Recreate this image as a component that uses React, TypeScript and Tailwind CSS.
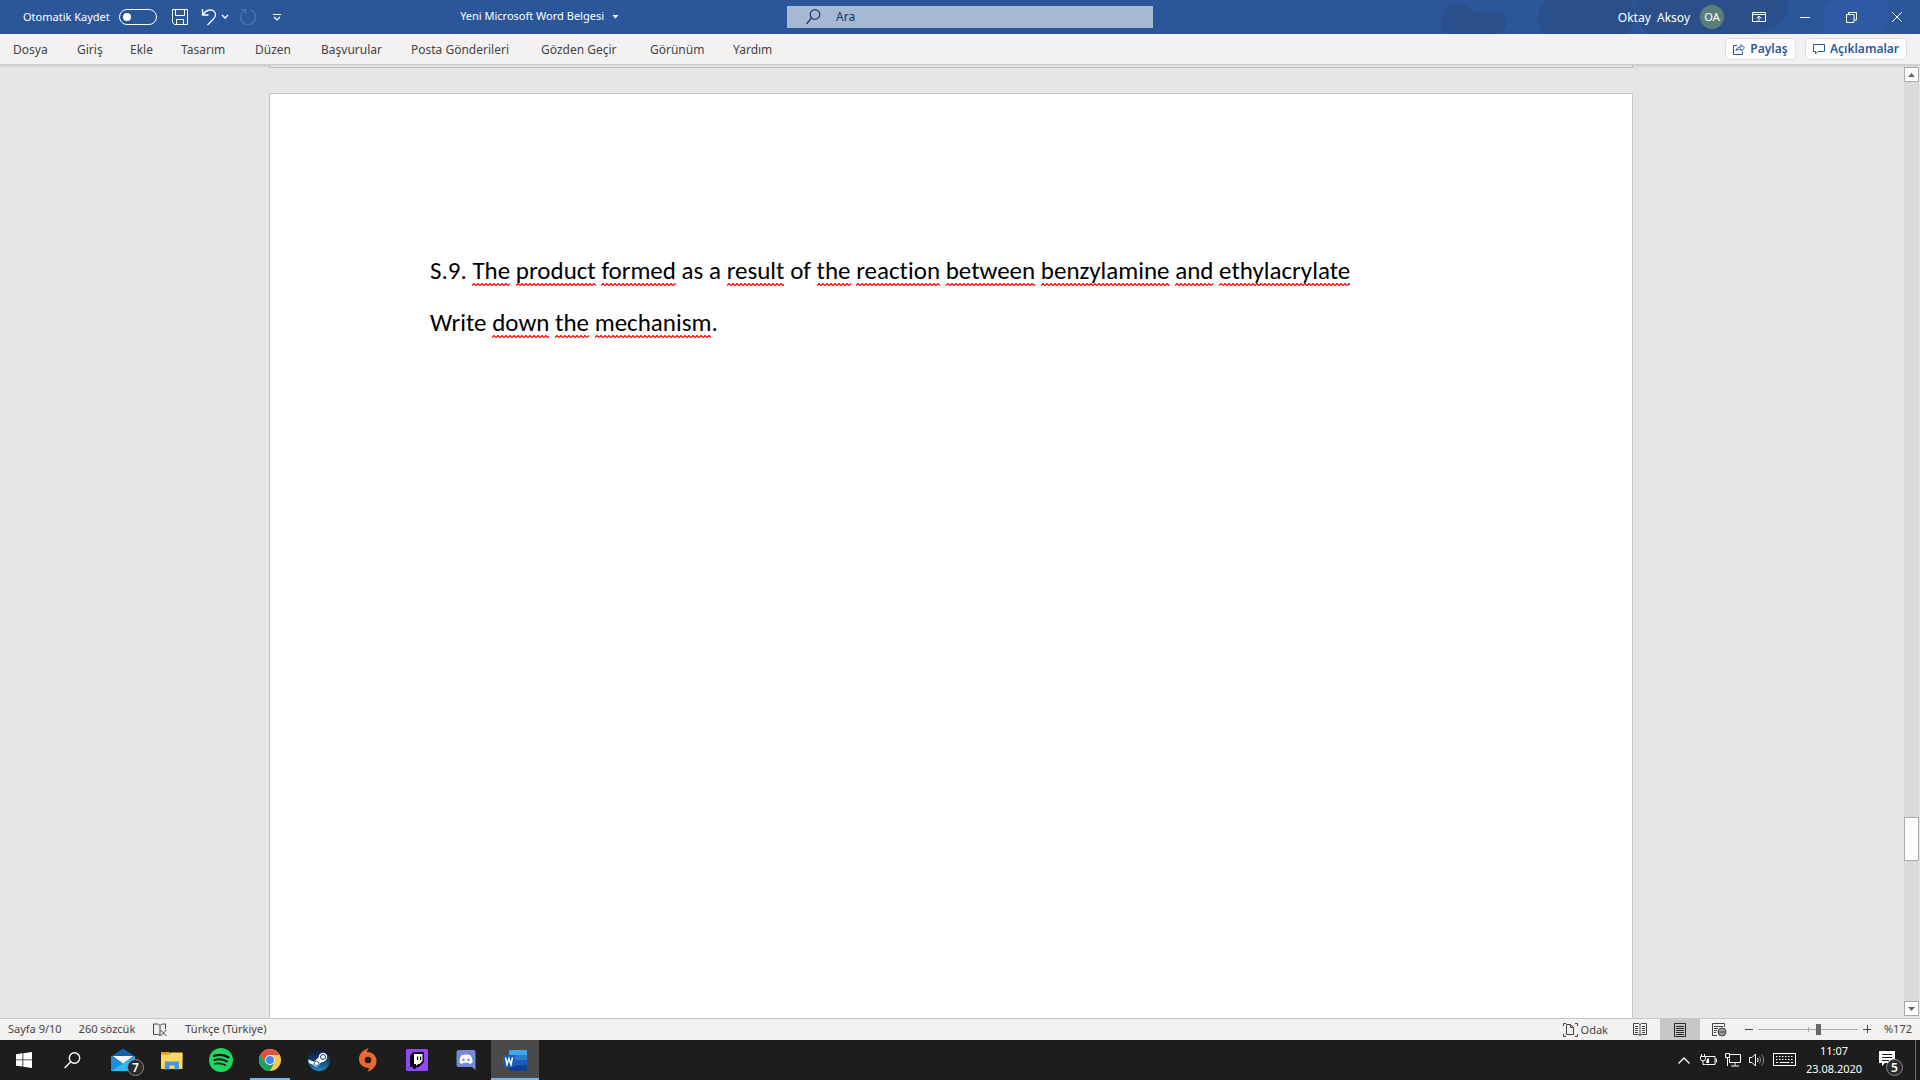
import React from "react";

const tabs = [
  { name: "Dosya", width: "w-16" },
  { name: "Giriş", width: "w-[53px]" },
  { name: "Ekle", width: "w-[51px]" },
  { name: "Tasarım", width: "w-[74px]" },
  { name: "Düzen", width: "w-[66px]" },
  { name: "Başvurular", width: "w-[90px]" },
  { name: "Posta Gönderileri", width: "w-[130px]" },
  { name: "Gözden Geçir", width: "w-[109px]" },
  { name: "Görünüm", width: "w-[83px]" },
  { name: "Yardım", width: "w-16" },
];

function TitlePattern() {
  return (
    <svg className="absolute right-0 top-0 h-full" width="520" height="34" viewBox="1400 0 520 34" aria-hidden="true">
      <g fill="#2a4f8a">
        <path d="M1441 20c0-9 6-17 16-17 7 0 13 5 17 10 8-3 18-2 24 0 8 2 11 8 8 14-2 5-8 7-12 7h-47c-4-3-6-8-6-14z" />
        <path d="M1545 0h85c8 12 6 24-3 34h-84c-7-12-6-24 2-34z" />
        <path d="M1636 0h152c2 12-4 24-18 28-6 3-12 5-16 6h-104c-14-10-16-22-14-34z" />
        <ellipse cx="1870" cy="34" rx="11" ry="8" />
      </g>
      <path d="M1834 0h52c6 10 4 24-6 34h-56c-4-16 0-26 10-34z" fill="#2d5aa2" />
    </svg>
  );
}

function TitleBar() {
  return (
    <header className="relative flex h-[34px] shrink-0 items-center bg-[#2b579a] text-xs text-white">
      <TitlePattern />
      <div className="relative flex flex-1 items-center text-[11px]">
        <label htmlFor="autosave" className="ml-[23px] pr-[9px]">Otomatik Kaydet</label>
        <span className="relative flex h-4 w-[38px] items-center">
          <input
            id="autosave"
            type="checkbox"
            role="switch"
            className="h-4 w-[38px] appearance-none rounded-full border border-white"
          />
          <span className="pointer-events-none absolute left-1 h-2 w-2 rounded-full bg-white" />
        </span>
        <button aria-label="Kaydet" className="ml-[14px]">
          <svg width="18" height="18" viewBox="0 0 18 18" fill="none" stroke="currentColor">
            <path d="M1.500 1.500h15v15H3.500l-2-2zM4.500 1.500v6h9v-6M5.500 16.500v-5h7v5" />
          </svg>
        </button>
        <button aria-label="Geri al" className="ml-3">
          <svg width="16" height="18" viewBox="0 0 16 18" fill="none" stroke="currentColor" strokeWidth="1.300">
            <path d="M1.500 1v6h6M1.500 7c2-3 4.500-5 8-5 3 0 5 2.200 5 4.800 0 2-1 3.200-2.500 4.700L6.500 17" />
          </svg>
        </button>
        <button aria-label="Geri alma seçenekleri" className="ml-1">
          <svg width="8" height="6" viewBox="0 0 8 6" fill="none" stroke="currentColor" strokeWidth="1.400">
            <path d="M1 1l3 3 3-3" />
          </svg>
        </button>
        <button aria-label="Yinele" disabled className="ml-[10px] text-[#5079b5]">
          <svg width="18" height="18" viewBox="0 0 18 18" fill="none" stroke="currentColor" strokeWidth="1.200">
            <path d="M1.500 1.500h5v5M6.500 2C3.500 3 1.500 5.800 1.500 9a7.500 7.500 0 0 0 15 0c0-3.200-2-6-5-7" />
          </svg>
        </button>
        <button aria-label="Hızlı Erişim Araç Çubuğunu Özelleştir" className="ml-4">
          <svg width="8" height="8" viewBox="0 0 8 8" fill="none" stroke="currentColor" strokeWidth="1.200">
            <path d="M0 1.500h8M1 4l3 3 3-3" />
          </svg>
        </button>
        <button className="mr-[148px] ml-auto flex items-center gap-2 pb-px">
          <span>Yeni Microsoft Word Belgesi</span>
          <svg width="7" height="4" viewBox="0 0 7 4" fill="currentColor">
            <path d="M0.500 0h6l-3 3.500z" />
          </svg>
        </button>
      </div>
      <div className="relative ml-5 flex h-[22px] w-[366px] items-center bg-[#a6b9d3] text-[#17356a]">
        <svg className="ml-[19px]" width="15" height="16" viewBox="0 0 15 16" fill="none" stroke="currentColor" strokeWidth="1.200">
          <circle cx="9" cy="5.500" r="4.800" />
          <path d="M5.500 9L0.500 15" />
        </svg>
        <input
          type="text"
          aria-label="Ara"
          placeholder="Ara"
          className="ml-[15px] min-w-0 flex-1 bg-transparent outline-none placeholder:text-[#17356a]"
        />
      </div>
      <div className="relative flex flex-1 items-center justify-end">
        <button className="flex items-center gap-[10px]">
          <span className="whitespace-pre pt-px">Oktay  Aksoy</span>
          <span className="flex h-6 w-6 items-center justify-center rounded-full bg-[#5b7f78] text-[11px]">OA</span>
        </button>
        <button aria-label="Şerit Görüntüleme Seçenekleri" className="ml-3 flex w-[46px] justify-center">
          <svg width="14" height="12" viewBox="0 0 14 12" fill="none" stroke="currentColor">
            <path d="M0.500 1.500h13v9H0.500zM0.500 3.500h13M7 10V5.500M4.500 7.500L7 5l2.500 2.500" />
          </svg>
        </button>
        <button aria-label="Simge durumuna küçült" className="flex w-[46px] justify-center">
          <svg width="10" height="10" viewBox="0 0 10 10" stroke="currentColor"><path d="M0 5.500h10" /></svg>
        </button>
        <button aria-label="Önceki boyut" className="flex w-[46px] justify-center">
          <svg width="11" height="11" viewBox="0 0 11 11" fill="none" stroke="currentColor">
            <path d="M0.500 2.500h7.500v8H0.500zM2.500 2.500V0.500h8v7.500H8" />
          </svg>
        </button>
        <button aria-label="Kapat" className="flex w-[46px] justify-center">
          <svg width="12" height="12" viewBox="0 0 12 12" stroke="currentColor">
            <path d="M1 1l10 10M11 1L1 11" />
          </svg>
        </button>
      </div>
    </header>
  );
}

function Ribbon() {
  return (
    <nav className="relative z-10 flex h-[31px] shrink-0 items-center border-b border-[#cfcfcf] bg-[#f3f2f1] px-[13px] text-[#444444] shadow-sm">
      <div className="flex flex-1 pt-[2px] text-xs">
        {tabs.map((t) => (
          <button key={t.name} className={"text-left whitespace-nowrap " + t.width}>{t.name}</button>
        ))}
      </div>
      <div className="flex gap-[9px] text-xs font-semibold text-[#2b579a]">
        <button className="flex h-[22px] w-[71px] items-center justify-center gap-[5px] rounded-sm border border-[#e1dfdd] bg-white">
          <svg width="12" height="12" viewBox="0 0 12 12" fill="none" stroke="currentColor">
            <path d="M4 2.500H0.500v9h9V8.500M3 8c0-2.500 1.500-4 5-4V1.500l3.500 3.500L8 8V6C5.500 6 4 6.500 3 8z" />
          </svg>
          Paylaş
        </button>
        <button className="flex h-[22px] w-[102px] items-center justify-center gap-[5px] rounded-sm border border-[#e1dfdd] bg-white">
          <svg width="12" height="12" viewBox="0 0 12 12" fill="none" stroke="currentColor">
            <path d="M0.500 1.500h11v7H5L2.500 11V8.500h-2z" />
          </svg>
          Açıklamalar
        </button>
      </div>
    </nav>
  );
}

function Misspelled({ children }: { children: string }) {
  return (
    <span className="relative">
      {children}
      <svg className="absolute bottom-0 left-0 h-[3px] w-full" aria-hidden="true">
        <defs>
          <pattern id="squiggle" width="4" height="3" patternUnits="userSpaceOnUse">
            <path d="M-2 0.500L0 2.500 2 0.500 4 2.500 6 0.500" stroke="#ff0000" strokeWidth="1.200" fill="none" />
          </pattern>
        </defs>
        <rect width="100%" height="3" fill="url(#squiggle)" />
      </svg>
    </span>
  );
}

function Marked({ text }: { text: string }) {
  return (
    <>
      {text.split(/(\[[^\]]+\])/).map((part, i) =>
        part.startsWith("[") ? <Misspelled key={i}>{part.slice(1, -1)}</Misspelled> : part,
      )}
    </>
  );
}

function Document() {
  return (
    <div className="flex min-h-0 flex-1 bg-[#e6e6e6]">
      <main className="flex min-w-0 flex-1 flex-col items-center overflow-hidden pr-[2px]">
        <div className="h-[3px] w-[1364px] max-w-full shrink-0 border-x border-b border-[#c0c0c0] bg-[#f1f1f1]" />
        <article className="mt-[25px] w-[1364px] max-w-full flex-1 border-x border-t border-[#c6c6c6] bg-white px-40 pt-[151px] font-[Carlito,Lato,sans-serif] text-[25px] leading-[52px] text-black [font-variant-ligatures:none]">
          <p className="whitespace-nowrap">
            <Marked text="S.9. [The] [product] [formed] as a [result] of [the] [reaction] [between] [benzylamine] [and] [ethylacrylate]" />
          </p>
          <p>
            <Marked text="Write [down] [the] [mechanism]." />
          </p>
        </article>
      </main>
      <div className="mt-[2px] mr-px mb-[2px] flex w-[15px] flex-col bg-[#dadada]">
        <button aria-label="Yukarı kaydır" className="flex h-[15px] items-center justify-center border border-[#ababab] bg-white">
          <svg width="7" height="4" viewBox="0 0 7 4" fill="#666"><path d="M0 4h7L3.500 0z" /></svg>
        </button>
        <div className="grow-[735]" />
        <button aria-label="Kaydırma kutusu" className="h-11 border border-[#ababab] bg-white" />
        <div className="grow-[140]" />
        <button aria-label="Aşağı kaydır" className="flex h-[15px] items-center justify-center border border-[#ababab] bg-white">
          <svg width="7" height="4" viewBox="0 0 7 4" fill="#666"><path d="M0 0h7L3.500 4z" /></svg>
        </button>
      </div>
    </div>
  );
}

function StatusBar() {
  return (
    <footer className="flex h-[22px] shrink-0 items-center border-t border-[#c6c6c6] bg-[#f3f2f1] px-2 text-[11px] text-[#444444]">
      <button>Sayfa 9/10</button>
      <button className="ml-[17px]">260 sözcük</button>
      <button aria-label="Yazım denetimi" className="ml-[18px]">
        <svg width="15" height="14" viewBox="0 0 15 14" fill="none" stroke="currentColor">
          <path d="M7 2.500C6 1.500 5 1 3.500 1H0.500v10.500h4c1 0 2 .5 2.500 1V2.500C8 1.500 9 1 10.500 1h2v5M7.500 7l6 6M13.500 7l-6 6" />
        </svg>
      </button>
      <button className="ml-[17px]">Türkçe (Türkiye)</button>
      <button className="mr-3 ml-auto flex items-center gap-[3px]">
        <svg width="15" height="14" viewBox="0 0 15 14" fill="none" stroke="currentColor">
          <path d="M0.500 3V0.500H3M12 0.500h2.500V3M0.500 11v2.500H3M12 13.500h2.500V11M3.500 1.500h4l3 3v7h-7zM7.500 1.500v3h3" />
        </svg>
        <span className="pt-[2px]">Odak</span>
      </button>
      <button aria-label="Okuma Modu" className="flex h-[21px] w-10 items-center justify-center">
        <svg width="14" height="13" viewBox="0 0 14 13" fill="none" stroke="currentColor">
          <path d="M7 1.500L5.500 0.500h-5v11h5L7 12.500l1.500-1h5v-11h-5L7 1.500v11M2 3.500h3M2 5.500h3M2 7.500h3M2 9.500h3M9 3.500h3M9 5.500h3M9 7.500h3M9 9.500h3" />
        </svg>
      </button>
      <button aria-label="Sayfa Düzeni" aria-pressed="true" className="flex h-[21px] w-10 items-center justify-center bg-[#c8c6c4] text-[#262626]">
        <svg width="12" height="14" viewBox="0 0 12 14" fill="none" stroke="currentColor">
          <path d="M0.500 0.500h11v13H0.500zM2 3.500h8M2 5.500h8M2 7.500h8M2 9.500h8M2 11.500h8" />
        </svg>
      </button>
      <button aria-label="Web Düzeni" className="flex h-[21px] w-10 items-center justify-center">
        <svg width="15" height="14" viewBox="0 0 15 14" fill="none" stroke="currentColor">
          <path d="M5 12.500H0.500v-12h12V4M2 3.500h9M2 5.500h4M2 7.500h3M2 9.500h2" />
          <circle cx="10" cy="9" r="4" />
          <path d="M6 9h8M10 5v8M8 5.500v7M12 5.500v7" />
        </svg>
      </button>
      <button aria-label="Uzaklaştır" className="ml-[5px]">
        <svg width="9" height="9" viewBox="0 0 9 9" stroke="currentColor"><path d="M0 4.500h8" /></svg>
      </button>
      <div className="relative ml-1 flex h-4 w-[100px] items-center">
        <span className="absolute left-1/2 h-[5px] w-px bg-[#aaaaaa]" />
        <input
          type="range"
          aria-label="Yakınlaştırma"
          min={0}
          max={100}
          defaultValue={61}
          className="relative h-px w-full appearance-none bg-[#aaaaaa] [&::-webkit-slider-thumb]:h-[11px] [&::-webkit-slider-thumb]:w-[5px] [&::-webkit-slider-thumb]:appearance-none [&::-webkit-slider-thumb]:bg-[#666666]"
        />
      </div>
      <button aria-label="Yakınlaştır" className="ml-[5px]">
        <svg width="9" height="9" viewBox="0 0 9 9" stroke="currentColor"><path d="M0 4.500h8M4.500 0v8" /></svg>
      </button>
      <button className="ml-3">%172</button>
    </footer>
  );
}

function WindowsIcon() {
  return (
    <svg width="16" height="16" viewBox="0 0 16 16" fill="#fff">
      <path d="M0 2.200l6.500-.9v6.200H0zM7.300 1.200L16 0v7.500H7.300zM0 8.300h6.500v6.300L0 13.700zM7.300 8.300H16V16l-8.700-1.300z" />
    </svg>
  );
}

function SearchIcon() {
  return (
    <svg width="17" height="17" viewBox="0 0 17 17" fill="none" stroke="#fff" strokeWidth="1.400">
      <circle cx="10.500" cy="6" r="5.200" />
      <path d="M6.700 9.800L0.700 16" />
    </svg>
  );
}

function MailIcon() {
  return (
    <svg width="24" height="24" viewBox="0 0 24 24">
      <path d="M0 8.500L12 0.500l12 8v4H0z" fill="#1163b0" />
      <path d="M0 8.500L24 23H0z" fill="#1b98e0" />
      <path d="M24 8.500V23H0l12-8z" fill="#30b8f2" />
      <path d="M0 8.500l12 7L0 23z" fill="#1b8fdc" />
      <path d="M1.500 8h21L12 15.500z" fill="#f5f5f5" />
    </svg>
  );
}

function FolderIcon() {
  return (
    <svg width="22" height="19" viewBox="0 0 22 19">
      <path d="M0 1h8l2 2h11.500v6H0z" fill="#e8a313" />
      <path d="M0 3.500h8.500l1.500-2h11.500v16.500H0z" fill="#ffd664" />
      <path d="M0 1.200h9v2H0z" fill="#e2a00f" />
      <path d="M4 18.500v-8h14v8h-4.500v-4h-5v4z" fill="#3d9be0" />
    </svg>
  );
}

function SpotifyIcon() {
  return (
    <svg width="24" height="24" viewBox="0 0 24 24">
      <circle cx="12" cy="12" r="12" fill="#1ed760" />
      <g fill="none" stroke="#111" strokeLinecap="round">
        <path d="M5 7.800c5-1.500 10-1 14.300 1.400" strokeWidth="2.400" />
        <path d="M5.500 12c4.200-1.200 8.600-.7 12.300 1.400" strokeWidth="2" />
        <path d="M6 15.800c3.600-.9 7-.5 10.200 1.300" strokeWidth="1.700" />
      </g>
    </svg>
  );
}

function ChromeIcon() {
  return (
    <svg width="22" height="22" viewBox="0 0 48 48">
      <circle cx="24" cy="24" r="24" fill="#fbc84a" />
      <path d="M24 13h20.800a24 24 0 0 0-41.600-1L14.500 30z" fill="#e04f43" />
      <path d="M3.200 12A24 24 0 0 0 24 48l9.500-18.500L24 35l-9.500-5.500z" fill="#1ea362" />
      <circle cx="24" cy="24" r="11" fill="#f1f1f1" />
      <circle cx="24" cy="24" r="8.800" fill="#4587f4" />
    </svg>
  );
}

function SteamIcon() {
  return (
    <svg width="22" height="22" viewBox="0 0 22 22">
      <defs>
        <linearGradient id="steam" x1="0" y1="0" x2="0" y2="1">
          <stop offset="0" stopColor="#10183c" />
          <stop offset="0.500" stopColor="#12386c" />
          <stop offset="1" stopColor="#1b8fc8" />
        </linearGradient>
      </defs>
      <circle cx="11" cy="11" r="11" fill="url(#steam)" />
      <path d="M0.200 10.500l6 2.300 4.500-4.500 7 3.500-6 2.500a3.300 3.300 0 0 1-6.300 1.400L0.800 14z" fill="#fff" />
      <circle cx="15" cy="8" r="4.200" fill="#fff" />
      <circle cx="15" cy="8" r="2.500" fill="#fff" stroke="#173a6c" strokeWidth="1" />
      <circle cx="8.500" cy="14.500" r="2.200" fill="#fff" stroke="#173a6c" strokeWidth="0.800" />
    </svg>
  );
}

function OriginIcon() {
  return (
    <svg width="20" height="26" viewBox="0 0 20 26">
      <path
        fillRule="evenodd"
        fill="#ee6730"
        d="M10.500 1C9.500 2.400 9 3.700 9 5c5 0 9.500 3.300 9.500 9 0 5-3.500 8.500-9 11 1-1.400 1.400-2.600 1.400-4C5.500 21 1 17.500 1 12 1 7 4.500 3.200 10.500 1zM10 9.700a3.300 3.300 0 1 0 0 6.600 3.300 3.300 0 0 0 0-6.600z"
      />
    </svg>
  );
}

function TwitchIcon() {
  return (
    <svg width="22" height="22" viewBox="0 0 22 22">
      <rect width="22" height="22" rx="1.500" fill="#9146ff" />
      <path d="M7 3h11v10l-5 5h-2l-2 2H7v-2H4V7z" fill="#060606" />
      <path d="M8 5h8.500v7l-3 3h-1.500l-2 2v-2H8z" fill="#fff" />
      <path d="M11 7.500h1.200V11H11zM14 7.500h1.200V11H14z" fill="#060606" />
    </svg>
  );
}

function DiscordIcon() {
  return (
    <svg width="20" height="22" viewBox="0 0 20 22">
      <path d="M2.500 1h15A2 2 0 0 1 19.500 3v18l-3.500-3H2.500A2 2 0 0 1 .5 16V3a2 2 0 0 1 2-2z" fill="#7289da" />
      <path d="M5.500 6.200c2-1 7-1 9 0 1.500 2.500 2.200 5 2 7.300-1 .9-2 1.200-3 1.400l-.8-1.200H7.300l-.8 1.200c-1-.2-2-.5-3-1.400-.2-2.300.5-4.800 2-7.300z" fill="#fff" />
      <circle cx="7.500" cy="10.800" r="1.300" fill="#7289da" />
      <circle cx="12.500" cy="10.800" r="1.300" fill="#7289da" />
    </svg>
  );
}

function WordIcon() {
  return (
    <svg width="24" height="21" viewBox="0 0 24 21">
      <path d="M7 0h16a1 1 0 0 1 1 1v4.500H6V1a1 1 0 0 1 1-1z" fill="#41a5ee" />
      <path d="M6 5.500h18v5H6z" fill="#2b7cd3" />
      <path d="M6 10.500h18v5H6z" fill="#185abd" />
      <path d="M6 15.500h18V20a1 1 0 0 1-1 1H7a1 1 0 0 1-1-1z" fill="#103f91" />
      <rect y="5" width="12" height="12" rx="1" fill="#185abd" />
      <path d="M2.500 7.500l1.500 7L6 8.500l2 6 1.500-7" fill="none" stroke="#fff" strokeWidth="1.500" />
    </svg>
  );
}

const apps: { name: string; icon: () => React.JSX.Element; badge?: string; state?: "open" | "active" }[] = [
  { name: "Posta", icon: MailIcon, badge: "7" },
  { name: "Dosya Gezgini", icon: FolderIcon },
  { name: "Spotify", icon: SpotifyIcon },
  { name: "Google Chrome", icon: ChromeIcon, state: "open" },
  { name: "Steam", icon: SteamIcon },
  { name: "Origin", icon: OriginIcon },
  { name: "Twitch", icon: TwitchIcon },
  { name: "Discord", icon: DiscordIcon },
  { name: "Word", icon: WordIcon, state: "active" },
];

function Badge({ children, className = "" }: { children: string; className?: string }) {
  return (
    <span className={"absolute flex h-[17px] w-[17px] items-center justify-center rounded-full border border-[#8a8a8a] bg-[#2b2b2b] text-xs leading-none font-semibold text-white " + className}>
      {children}
    </span>
  );
}

function Taskbar() {
  return (
    <div className="flex h-10 shrink-0 items-stretch bg-[#1d1d1d] text-[11px] text-white">
      <button aria-label="Başlat" className="flex w-12 items-center justify-center"><WindowsIcon /></button>
      <button aria-label="Ara" className="mr-[3px] flex w-12 items-center justify-center"><SearchIcon /></button>
      <div className="flex gap-px">
        {apps.map(({ name, icon: Icon, badge, state }) => (
          <button
            key={name}
            aria-label={name}
            className={"relative flex w-12 items-center justify-center " + (state === "active" ? "bg-[#4a4a4a]" : "")}
          >
            <Icon />
            {badge && <Badge className="top-[19px] left-7">{badge}</Badge>}
            {state && (
              <span className={"absolute bottom-0 h-[2px] bg-[#76b9ed] " + (state === "active" ? "inset-x-0" : "inset-x-1")} />
            )}
          </button>
        ))}
      </div>
      <div className="ml-auto flex items-center">
        <button aria-label="Gizli simgeleri göster">
          <svg width="12" height="7" viewBox="0 0 12 7" fill="none" stroke="#fff" strokeWidth="1.300"><path d="M0.500 6.500L6 1l5.500 5.500" /></svg>
        </button>
        <button aria-label="Pil" className="ml-[10px]">
          <svg width="17" height="12" viewBox="0 0 17 12" fill="none" stroke="#fff">
            <path d="M6 2.500h9v8H5.500M15.500 5h1v3h-1" />
            <path d="M1.500 0v2M4.500 0v2M0.500 2.500h5v2a2.500 2.500 0 0 1-5 0zM3 7v3.500h2" />
            <path d="M7 4.500h2v4.500H6z" fill="#fff" stroke="none" />
          </svg>
        </button>
        <button aria-label="Ağ" className="ml-2">
          <svg width="16" height="14" viewBox="0 0 16 14" fill="none" stroke="#fff">
            <path d="M4.500 1.500h11v8h-11V5.500M0.500 0.500h4v4h-4zM2.500 4.500v8.500M10 9.500v3M6 13h8" />
          </svg>
        </button>
        <button aria-label="Ses" className="ml-2">
          <svg width="16" height="14" viewBox="0 0 16 14" fill="none" stroke="#fff">
            <path d="M0.500 4.500H3l3.500-3.500v12L3 9.500H0.500zM8.500 5q1.300 2 0 4" />
            <path d="M10.500 3.500q2.500 3.500 0 7M12.700 1.500q4 5.500 0 11" stroke="#8a8a8a" />
          </svg>
        </button>
        <button aria-label="Dokunmatik klavye" className="ml-2">
          <svg width="23" height="14" viewBox="0 0 23 14" fill="none" stroke="#fff">
            <rect x="0.500" y="0.500" width="22" height="12" />
            <path d="M3 3.500h17.500M3 6.500h17.500" strokeDasharray="1.500 1.500" />
            <path d="M3 9.500h2M6.500 9.500h10M18 9.500h2" />
          </svg>
        </button>
        <button className="ml-[5px] flex w-[66px] flex-col items-center leading-[18px]">
          <span>11:07</span>
          <span>23.08.2020</span>
        </button>
        <button aria-label="Bildirimler" className="relative ml-3 flex h-10 w-6 items-center">
          <svg className="mb-1" width="16" height="15" viewBox="0 0 16 15">
            <path d="M0 0h16v12H6l-3 3v-3H0z" fill="#fff" />
            <path d="M3 3.500h10M3 6.500h10M3 9.500h7" stroke="#1d1d1d" />
          </svg>
          <Badge className="top-[19px] left-[7px]">5</Badge>
        </button>
        <span className="ml-3 h-10 w-px bg-[#6b6b6b]" />
        <span className="w-1" />
      </div>
    </div>
  );
}

export default function App() {
  return (
    <div className="flex h-screen flex-col overflow-hidden font-['Noto_Sans',sans-serif]">
      <TitleBar />
      <Ribbon />
      <Document />
      <StatusBar />
      <Taskbar />
    </div>
  );
}
